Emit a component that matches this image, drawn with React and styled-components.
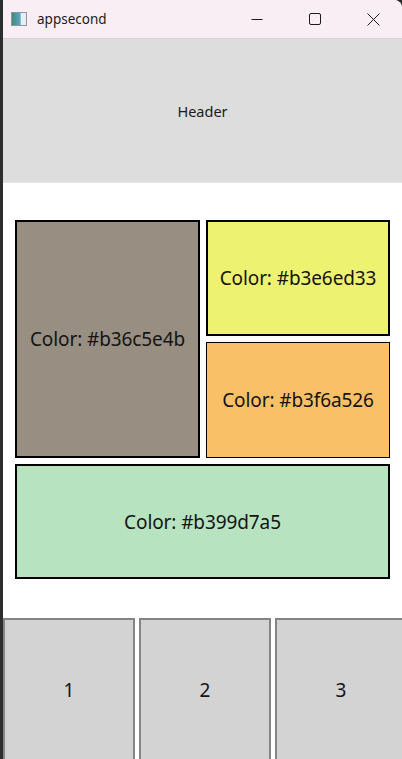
import styled, { createGlobalStyle } from "styled-components";

const GlobalStyle = createGlobalStyle`
  html, body {
    margin: 0;
    padding: 0;
    background: #2a2a2a;
    overflow: hidden;
  }
  body {
    font-family: "Noto Sans", "Open Sans", sans-serif;
  }
`;

const Screen = styled.div`
  display: flex;
  width: 402px;
  height: 759px;
  overflow: hidden;
`;

const DesktopEdge = styled.div`
  width: 3px;
  flex: none;
  background: #2b2d2f;
`;

const Window = styled.div`
  display: flex;
  flex-direction: column;
  flex: 1;
  min-width: 0;
  background: #ffffff;
  border-top-right-radius: 8px;
  overflow: hidden;
`;

const TitleBar = styled.div`
  display: flex;
  align-items: center;
  height: 38px;
  flex: none;
  background: #f9eef4;
  color: #1b1b1b;
  font-family: "Noto Sans", sans-serif;
  font-size: 13.5px;
`;

const AppIcon = styled.div`
  width: 14px;
  height: 12px;
  margin: 0 10px 0 8px;
  border: 1px solid #8a96a0;
  background: linear-gradient(90deg, #3f8c7a 0%, #5fa6c8 60%, #e8eef2 62%, #e8eef2 100%);
`;

const Title = styled.span`
  flex: 1;
  padding-bottom: 1px;
`;

const CaptionButton = styled.div`
  width: 58px;
  height: 38px;
  display: flex;
  align-items: center;
  justify-content: center;
`;

const Header = styled.div`
  height: 145px;
  flex: none;
  display: flex;
  align-items: center;
  justify-content: center;
  background: #dddddd;
  border-top: 1px solid #d3d3d3;
  border-bottom: 1px solid #e6e6e6;
  box-sizing: border-box;
  color: #1a1a1a;
  font-size: 14.5px;
`;

const Content = styled.div`
  flex: 1;
  display: flex;
  align-items: center;
  padding: 0 12px;
`;

const TileGrid = styled.div`
  flex: 1;
  display: grid;
  grid-template-columns: 185px 1fr;
  grid-template-rows: 116px 116px 115px;
  gap: 6px;
  margin-top: -2px;
`;

const Tile = styled.div`
  display: flex;
  align-items: center;
  justify-content: center;
  background: ${(p) => p.color};
  border: ${(p) => p.border}px solid #000;
  grid-column: ${(p) => p.col || "auto"};
  grid-row: ${(p) => p.row || "auto"};
  color: #141414;
  font-size: 19px;
  letter-spacing: -0.1px;
  white-space: nowrap;
`;

const ButtonRow = styled.div`
  height: 141px;
  flex: none;
  display: grid;
  grid-template-columns: repeat(3, 132px);
  gap: 4px;
`;

const NumberButton = styled.div`
  display: flex;
  align-items: center;
  justify-content: center;
  background: #d3d3d3;
  border: 2px solid #858585;
  border-bottom: none;
  color: #141414;
  font-size: 19px;
`;

const tiles = [
  { color: "#6c5e4bb3", label: "#b36c5e4b", row: "1 / span 2", col: "1", border: 2 },
  { color: "#e6ed33b3", label: "#b3e6ed33", row: "1", col: "2", border: 2 },
  { color: "#f6a526b3", label: "#b3f6a526", row: "2", col: "2", border: 1.5 },
  { color: "#99d7a5b3", label: "#b399d7a5", row: "3", col: "1 / span 2", border: 2 },
];

export default function App() {
  return (
    <>
      <GlobalStyle />
      <Screen>
        <DesktopEdge />
        <Window>
          <TitleBar>
            <AppIcon />
            <Title>appsecond</Title>
            <CaptionButton>
              <svg width="12" height="12" viewBox="0 0 12 12">
                <path d="M0.5 6.5h11" stroke="#1b1b1b" strokeWidth="1" />
              </svg>
            </CaptionButton>
            <CaptionButton>
              <svg width="12" height="12" viewBox="0 0 12 12">
                <rect x="0.5" y="0.5" width="11" height="11" rx="1.5" fill="none" stroke="#1b1b1b" strokeWidth="1" />
              </svg>
            </CaptionButton>
            <CaptionButton>
              <svg width="13" height="13" viewBox="0 0 13 13">
                <path d="M0.5 0.5l12 12M12.5 0.5l-12 12" stroke="#1b1b1b" strokeWidth="1" />
              </svg>
            </CaptionButton>
          </TitleBar>
          <Header>Header</Header>
          <Content>
            <TileGrid>
              {tiles.map((t) => (
                <Tile key={t.label} color={t.color} row={t.row} col={t.col} border={t.border}>
                  Color: {t.label}
                </Tile>
              ))}
            </TileGrid>
          </Content>
          <ButtonRow>
            {[1, 2, 3].map((n) => (
              <NumberButton key={n}>{n}</NumberButton>
            ))}
          </ButtonRow>
        </Window>
      </Screen>
    </>
  );
}
